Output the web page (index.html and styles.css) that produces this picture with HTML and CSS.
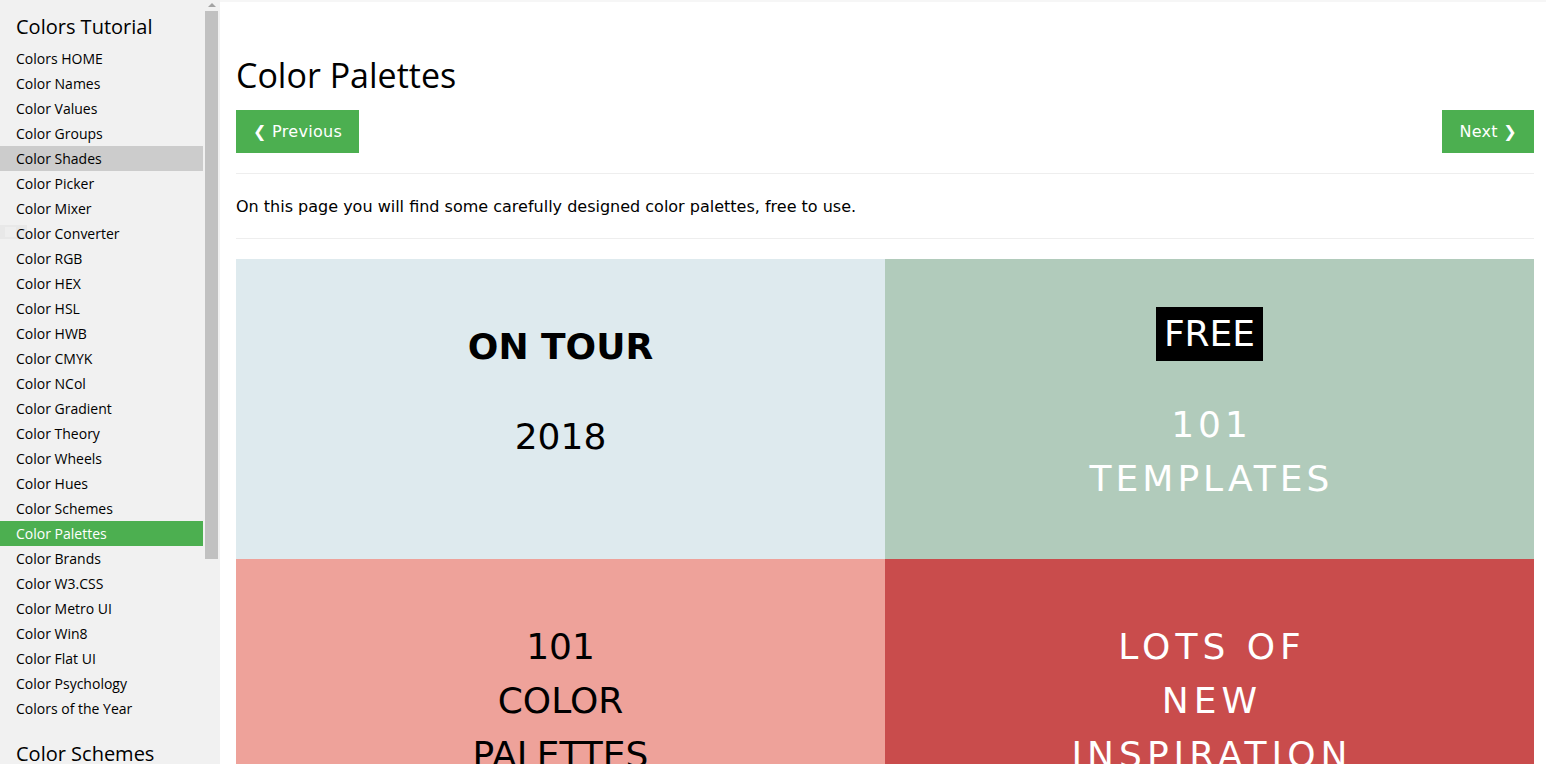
FILE: index.html
```html
<!DOCTYPE html>
<html>
<head>
<meta charset="utf-8">
<title>Color Palettes</title>
<link rel="stylesheet" href="styles.css">
</head>
<body>
<div class="page">
  <nav class="sidebar">
    <div class="ghost-box"><div class="ghost-inner"></div></div>
    <div class="side-content">
      <h2 class="side-title">Colors Tutorial</h2>
      <a class="side-link">Colors HOME</a>
      <a class="side-link">Color Names</a>
      <a class="side-link">Color Values</a>
      <a class="side-link">Color Groups</a>
      <a class="side-link hover">Color Shades</a>
      <a class="side-link">Color Picker</a>
      <a class="side-link">Color Mixer</a>
      <a class="side-link">Color Converter</a>
      <a class="side-link">Color RGB</a>
      <a class="side-link">Color HEX</a>
      <a class="side-link">Color HSL</a>
      <a class="side-link">Color HWB</a>
      <a class="side-link">Color CMYK</a>
      <a class="side-link">Color NCol</a>
      <a class="side-link">Color Gradient</a>
      <a class="side-link">Color Theory</a>
      <a class="side-link">Color Wheels</a>
      <a class="side-link">Color Hues</a>
      <a class="side-link">Color Schemes</a>
      <a class="side-link active">Color Palettes</a>
      <a class="side-link">Color Brands</a>
      <a class="side-link">Color W3.CSS</a>
      <a class="side-link">Color Metro UI</a>
      <a class="side-link">Color Win8</a>
      <a class="side-link">Color Flat UI</a>
      <a class="side-link">Color Psychology</a>
      <a class="side-link">Colors of the Year</a>
      <h2 class="side-title second">Color Schemes</h2>
    </div>
    <div class="scrollbar">
      <div class="sb-arrow"></div>
      <div class="sb-thumb"></div>
    </div>
  </nav>
  <main class="main">
    <h1 class="title">Color Palettes</h1>
    <div class="nav-buttons">
      <a class="btn">&#10094; Previous</a>
      <a class="btn">Next &#10095;</a>
    </div>
    <hr class="rule">
    <p class="intro">On this page you will find some carefully designed color palettes, free to use.</p>
    <hr class="rule second-rule">
    <div class="palette">
      <div class="cell c1">
        <div class="line bold">ON TOUR</div>
        <div class="line year">2018</div>
      </div>
      <div class="cell c2">
        <div class="line"><span class="free">FREE</span></div>
        <div class="line spaced gap2">101</div>
        <div class="line spaced">TEMPLATES</div>
      </div>
      <div class="cell c3">
        <div class="line">101</div>
        <div class="line">COLOR</div>
        <div class="line">PALETTES</div>
      </div>
      <div class="cell c4">
        <div class="line spaced wide">LOTS OF</div>
        <div class="line spaced wide">NEW</div>
        <div class="line spaced wide">INSPIRATION</div>
      </div>
    </div>
  </main>
</div>
</body>
</html>
```

FILE: styles.css
```css
* { box-sizing: border-box; }
html, body {
  margin: 0;
  padding: 0;
  height: 764px;
  overflow: hidden;
  background: #fff;
}
body {
  font-family: "DejaVu Sans", Verdana, sans-serif;
  font-size: 15px;
  color: #000;
}
.page {
  display: flex;
  height: 764px;
}
.sidebar {
  position: relative;
  width: 220px;
  flex: 0 0 220px;
  background: #f1f1f1;
  display: flex;
  height: 764px;
  overflow: hidden;
}
.side-content {
  position: relative;
  z-index: 1;
  width: 203px;
  flex: 0 0 203px;
  font-family: "Open Sans", "Noto Sans", sans-serif;
}
.side-title {
  margin: 0;
  padding: 14px 16px 6px;
  font-size: 20px;
  line-height: 26px;
  font-weight: 400;
  color: #000;
  white-space: nowrap;
}
.side-title.second {
  padding-top: 20px;
}
.side-link {
  display: block;
  height: 25px;
  line-height: 25px;
  padding: 0 16px;
  font-size: 14px;
  color: #000;
  white-space: nowrap;
}
.side-link.hover { background: #cccccc; }
.side-link.active { background: #4caf50; color: #fff; }
.scrollbar {
  width: 17px;
  flex: 0 0 17px;
  display: flex;
  flex-direction: column;
  align-items: flex-start;
}
.sb-arrow {
  width: 0;
  height: 0;
  margin: 3px 0 0 5px;
  border-left: 4px solid transparent;
  border-right: 4px solid transparent;
  border-bottom: 4px solid #a3a3a3;
}
.sb-thumb {
  margin: 4px 0 0 2px;
  width: 13px;
  height: 548px;
  background: #c1c1c1;
}
.ghost-box {
  position: absolute;
  z-index: 0;
  left: 0;
  top: 225px;
  width: 27px;
  height: 14px;
  background: #e8e8e8;
}
.ghost-inner {
  margin: 2px 0 0 5px;
  width: 11px;
  height: 10px;
  background: #eeeeee;
}
.main {
  flex: 1;
  padding: 0 12px 0 16px;
  border-top: 2px solid #f6f6f6;
  min-width: 0;
}
.title {
  margin: 53px 0 0;
  height: 40px;
  font-family: "Open Sans", "Noto Sans", sans-serif;
  font-size: 34px;
  line-height: 40px;
  font-weight: 400;
}
.nav-buttons {
  margin-top: 15px;
  display: flex;
  justify-content: space-between;
}
.btn {
  display: flex;
  align-items: center;
  height: 43px;
  padding: 0 17px;
  background: #4caf50;
  color: #fff;
  font-family: "DejaVu Sans", Verdana, sans-serif;
  font-size: 16px;
  letter-spacing: 0.3px;
}
.rule {
  margin: 20px 0 0;
  border: 0;
  border-top: 1px solid #eeeeee;
  height: 0;
}
.intro {
  margin: 22px 0 0;
  line-height: 22px;
  height: 22px;
  font-size: 16px;
}
.second-rule {
  margin-top: 20px;
}
.palette {
  margin-top: 20px;
  display: grid;
  grid-template-columns: 1fr 1fr;
  grid-template-rows: 300px 300px;
}
.cell {
  display: flex;
  flex-direction: column;
  align-items: center;
  font-size: 36px;
  line-height: 54px;
}
.line {
  height: 54px;
  white-space: nowrap;
}
.c1 { background: #deeaee; color: #000; padding-top: 61px; }
.c2 { background: #b1cbbb; color: #fff; padding-top: 48px; }
.c3 { background: #eea29a; color: #000; padding-top: 61px; }
.c4 { background: #c94c4c; color: #fff; padding-top: 61px; }
.bold { font-weight: 700; }
.year { margin-top: 36px; }
.free {
  display: inline-block;
  background: #000;
  color: #fff;
  padding: 0 8px;
  line-height: 54px;
}
.gap2 { margin-top: 37px; }
.spaced { letter-spacing: 4px; text-indent: 4px; }
.spaced.wide { letter-spacing: 5px; text-indent: 5px; }
```
